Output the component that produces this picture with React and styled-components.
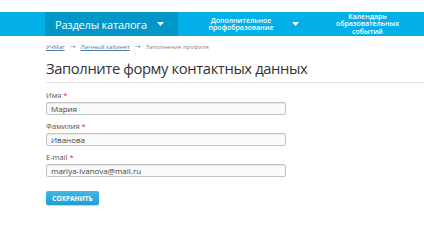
import styled, { createGlobalStyle } from "styled-components";

const GlobalStyle = createGlobalStyle`
  body {
    margin: 0;
    background: #fff;
    font-family: "Open Sans", "Liberation Sans", sans-serif;
  }
`;

const Caret = () => (
  <svg width="7" height="4" viewBox="0 0 7 4">
    <path d="M0 0h7L3.5 4z" fill="#fff" />
  </svg>
);

function App() {
  return (
    <Page>
      <GlobalStyle />
      <NavBar>
        <NavItem $width={133} $dark>
          <CatalogLabel>Разделы каталога</CatalogLabel>
          <Caret />
        </NavItem>
        <NavItem $width={127}>
          <SmallLabel>
            Дополнительное
            <br />
            профобразование
          </SmallLabel>
          <Caret />
        </NavItem>
        <NavItem $width={119} $center>
          <SmallLabel>
            Календарь
            <br />
            образовательных
            <br />
            событий
          </SmallLabel>
        </NavItem>
      </NavBar>
      <Content>
        <Crumbs>
          <CrumbLink>УчМаг</CrumbLink>
          <Arrow>→</Arrow>
          <CrumbLink>Личный кабинет</CrumbLink>
          <Arrow>→</Arrow>
          <span>Заполнение профиля</span>
        </Crumbs>
        <Title>Заполните форму контактных данных</Title>
        <Form>
          <Field>
            <Label>
              Имя <Req>*</Req>
            </Label>
            <Input defaultValue="Мария" />
          </Field>
          <Field>
            <Label>
              Фамилия <Req>*</Req>
            </Label>
            <Input defaultValue="Иванова" />
          </Field>
          <Field>
            <Label>
              E-mail <Req>*</Req>
            </Label>
            <Input defaultValue="mariya-ivanova@mail.ru" />
          </Field>
          <SaveButton>СОХРАНИТЬ</SaveButton>
        </Form>
      </Content>
    </Page>
  );
}

export default App;

const Page = styled.div`
  width: 424px;
  height: 249px;
  padding-top: 12px;
  box-sizing: border-box;
  overflow: hidden;
`;

const NavBar = styled.nav`
  display: flex;
  height: 24px;
  padding-left: 45px;
  background: #02afe9;
`;

const NavItem = styled.div`
  display: flex;
  flex: none;
  align-items: center;
  justify-content: ${(p) => (p.$center ? "center" : "space-between")};
  width: ${(p) => p.$width}px;
  box-sizing: border-box;
  padding: 0 ${(p) => (p.$dark ? 14 : 6)}px 0 ${(p) => (p.$dark ? 10 : 12)}px;
  background: ${(p) => (p.$dark ? "#0198c9" : "transparent")};
  color: #fff;
`;

const CatalogLabel = styled.span`
  font-size: 11px;
  letter-spacing: -0.2px;
  white-space: nowrap;
`;

const SmallLabel = styled.span`
  flex: 1;
  text-align: center;
  font-size: 7px;
  line-height: 7.5px;
  font-weight: 600;
  white-space: nowrap;
`;

const Content = styled.main`
  padding-left: 46px;
`;

const Crumbs = styled.div`
  display: flex;
  align-items: center;
  gap: 5px;
  margin-top: 7px;
  height: 8px;
  font-size: 6px;
  color: #888;
  white-space: nowrap;
`;

const CrumbLink = styled.span`
  color: #4a7aa8;
  text-decoration: underline;
`;

const Arrow = styled.span`
  font-family: "DejaVu Sans", sans-serif;
  font-size: 7px;
  color: #888;
`;

const Title = styled.h1`
  margin: 7px 0 0;
  padding-bottom: 4px;
  border-bottom: 1px solid #e2e2e2;
  font-size: 14.8px;
  font-weight: 400;
  letter-spacing: -0.4px;
  line-height: 20px;
  color: #333;
  white-space: nowrap;
`;

const Form = styled.form`
  display: flex;
  flex-direction: column;
  align-items: flex-start;
  gap: 7px;
  padding-top: 8px;
`;

const Field = styled.label`
  display: flex;
  flex-direction: column;
  gap: 2px;
`;

const Label = styled.span`
  font-size: 7.5px;
  line-height: 9px;
  color: #555;
`;

const Req = styled.span`
  color: #e0303a;
`;

const Input = styled.input`
  height: 13px;
  box-sizing: border-box;
  width: 240px;
  padding: 0 4px;
  border: 1px solid #c3c3c3;
  border-radius: 2px;
  background: #fafafa;
  font-family: inherit;
  font-size: 8px;
  color: #444;
  box-shadow: inset 0 1px 1px rgba(0, 0, 0, 0.08);
`;

const SaveButton = styled.button`
  margin-top: 7px;
  width: 53px;
  height: 14px;
  padding: 0;
  border: none;
  border-radius: 2px;
  background: linear-gradient(#3fb9e6, #1f9ed1);
  box-shadow: 0 1px 1px rgba(0, 0, 0, 0.2);
  color: #fff;
  font-family: inherit;
  font-size: 6.5px;
  font-weight: 700;
`;
